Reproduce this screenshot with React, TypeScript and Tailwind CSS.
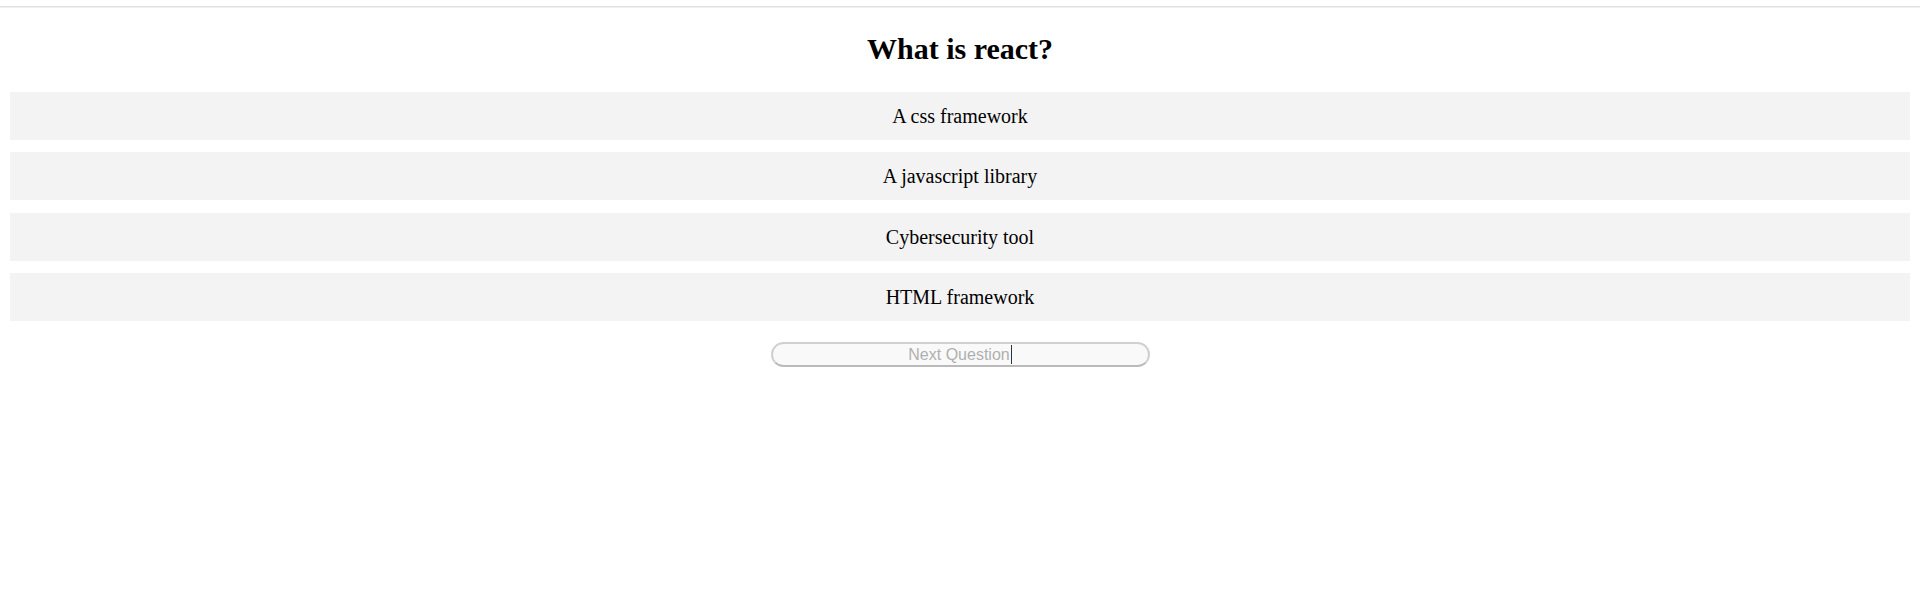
import React from "react";

const options = ["A css framework", "A javascript library", "Cybersecurity tool", "HTML framework"];

export default function App() {
  return (
    <div className="min-h-[613px] bg-white font-['Liberation_Serif',serif] text-black">
      <div className="pt-[6px]">
        <div className="h-px bg-[#e2e2e2]" />
        <div className="h-px bg-[#f0f0f0]" />
      </div>
      <h1 className="mt-[23px] text-center text-[30px] font-bold leading-[36px]">What is react?</h1>
      <div className="mx-[10px] mt-[25px] flex flex-col gap-[12.4px]">
        {options.map((o) => (
          <div key={o} className="flex h-[48px] items-center justify-center bg-[#f3f3f3] text-[20px]">
            {o}
          </div>
        ))}
      </div>
      <div className="mt-[21px] flex justify-center">
        <button
          disabled
          className="relative flex h-[25px] w-[379px] items-center justify-center rounded-full border-2 border-[#d0d0d0] border-b-[#bababa] bg-[#f9f9f9] font-['Liberation_Sans',sans-serif] text-[16px] text-[#b0b0b0]"
        >
          Next Question
          <span className="ml-[1px] inline-block h-[19px] w-px bg-[#333]" />
        </button>
      </div>
    </div>
  );
}
